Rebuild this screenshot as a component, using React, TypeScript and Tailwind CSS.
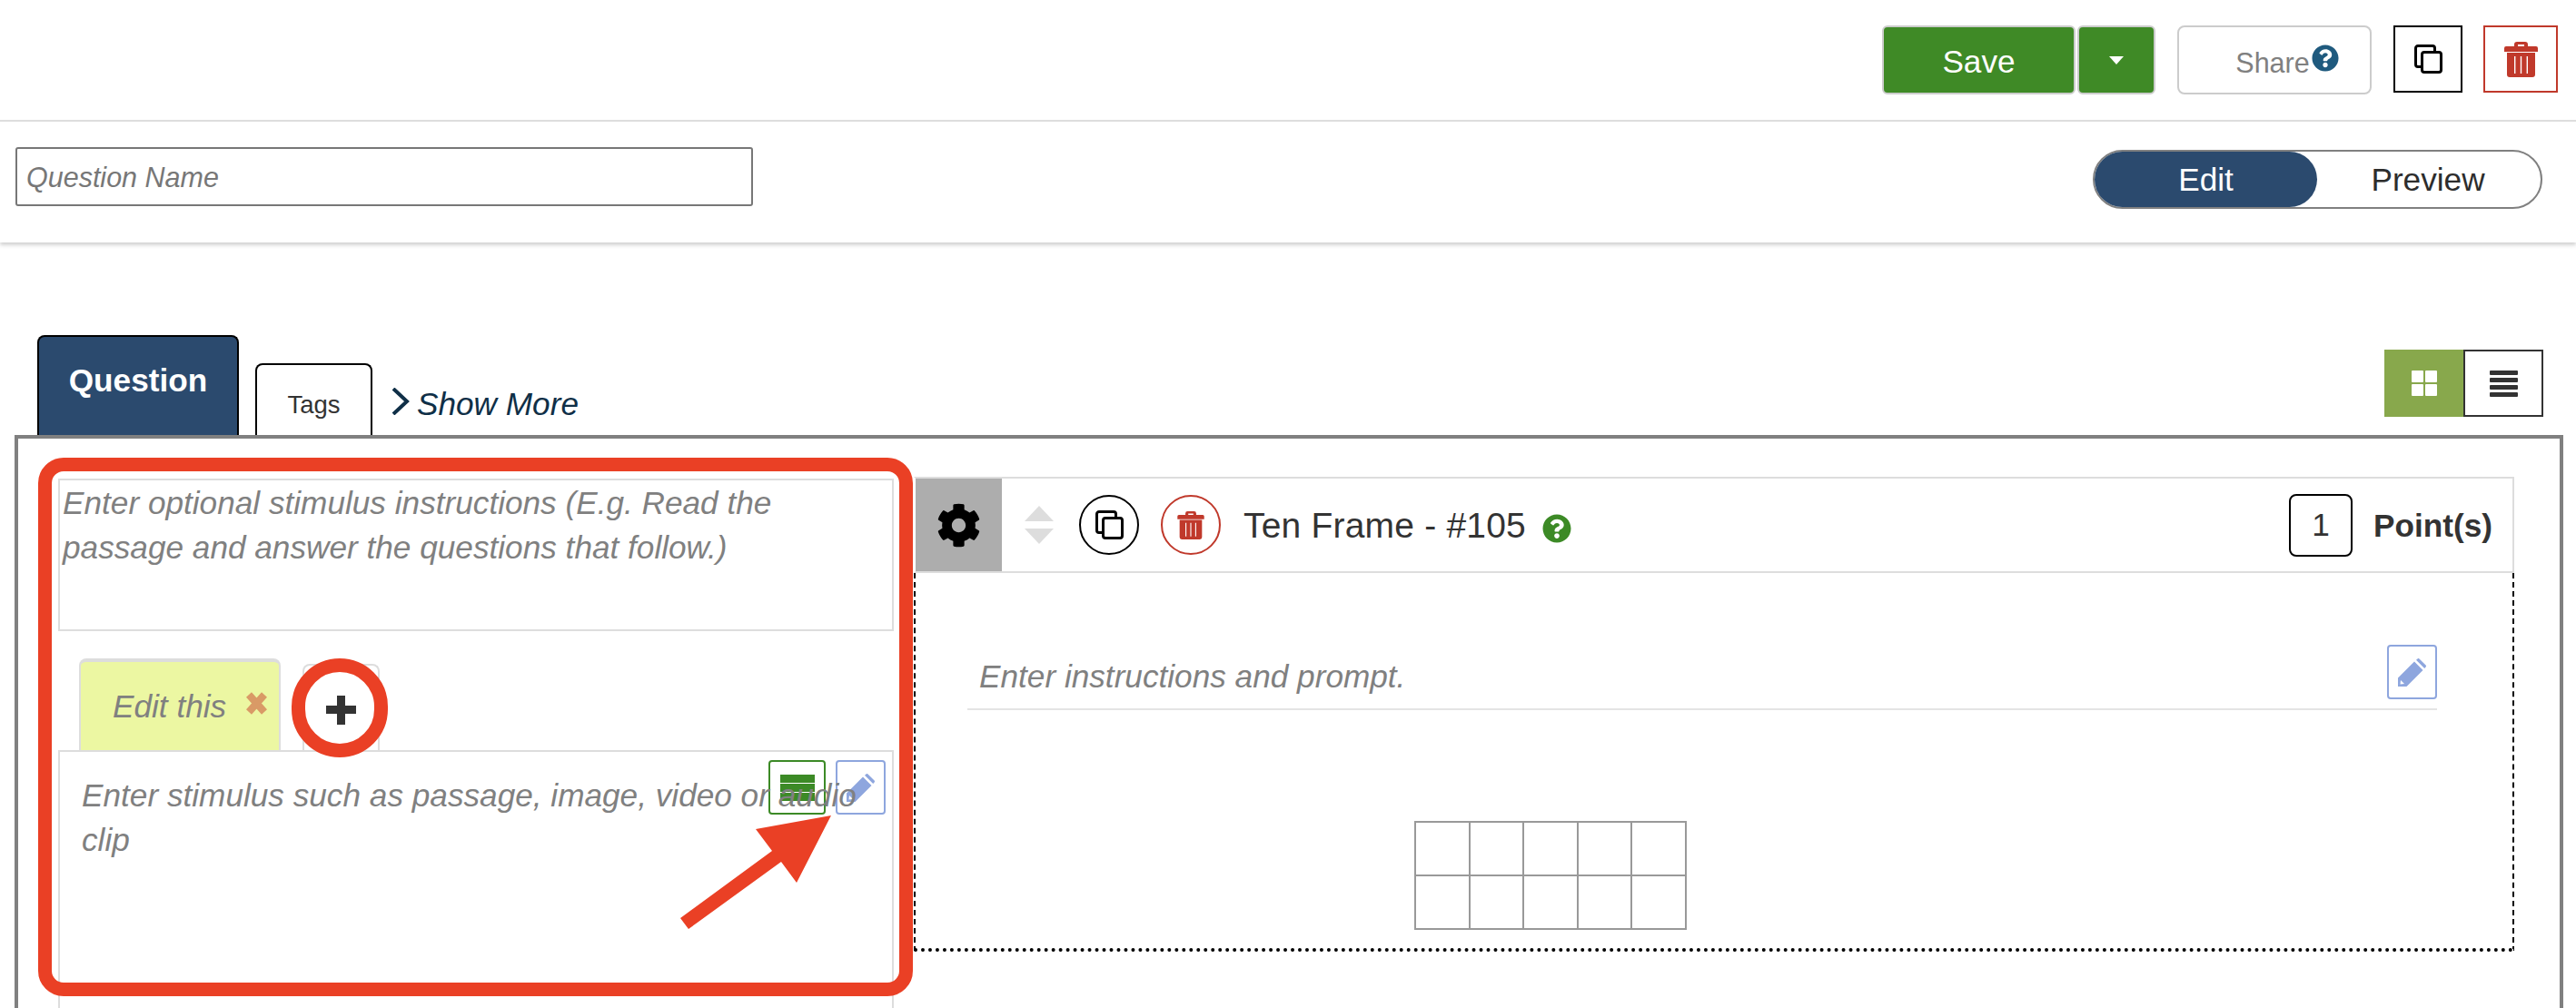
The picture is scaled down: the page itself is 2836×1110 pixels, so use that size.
import { FaCog, FaQuestionCircle } from "react-icons/fa";

function CopyIcon() {
  return (
    <svg viewBox="0 0 31 32" className="h-[32px] w-[31px]" fill="none" stroke="black" strokeWidth="3">
      <path d="M7 24.5 H4 a2.5 2.5 0 0 1 -2.5 -2.5 V4 a2.5 2.5 0 0 1 2.5 -2.5 H20 a2.5 2.5 0 0 1 2.5 2.5 V7" />
      <rect x="8.5" y="8.5" width="21" height="22" rx="2.5" />
    </svg>
  );
}

function TrashIcon({ className }: { className: string }) {
  return (
    <svg viewBox="0 0 37 39" className={className}>
      <path
        fill="#c0392b"
        fillRule="evenodd"
        d="M11 3 a3 3 0 0 1 3 -3 h9 a3 3 0 0 1 3 3 v2 h9 a2 2 0 0 1 2 2 v4 H0 V7 a2 2 0 0 1 2 -2 h9 z M15 3 v2 h7 v-2 z M3 12 H34 V36 a3 3 0 0 1 -3 3 H6 a3 3 0 0 1 -3 -3 z M11 16 v19 h1.4 v-19 z M17.8 16 v19 h1.4 v-19 z M24.6 16 v19 h1.4 v-19 z"
      />
    </svg>
  );
}

function PencilIcon() {
  return (
    <svg viewBox="0 0 31 31" className="h-[31px] w-[31px]">
      <path
        fill="#8ea6de"
        fillRule="evenodd"
        d="M0 31 V21.5 L18 3.5 L27.5 13 L9.5 31 z M3 24 L2.5 28.5 L7 28 z M20 1.8 L21.5 0.4 a1.5 1.5 0 0 1 2 0 L30.6 7.5 a1.5 1.5 0 0 1 0 2 L29.2 11 z"
      />
    </svg>
  );
}

function RowsIcon() {
  return (
    <div className="flex w-[38px] flex-col gap-[1px]">
      {[0, 1, 2].map((i) => (
        <div key={i} className="h-[9px] bg-[#3c8a26]" />
      ))}
    </div>
  );
}

function TenFrame() {
  return (
    <div className="grid h-[120px] w-[300px] grid-cols-5 grid-rows-2 border-t-2 border-b-2 border-l border-r border-[#999]">
      {Array.from({ length: 10 }).map((_, i) => (
        <div key={i} className={`border-x border-[#999] ${i < 5 ? "border-b" : "border-t"}`} />
      ))}
    </div>
  );
}

export default function App() {
  return (
    <div className="relative h-[1110px] w-[2836px] overflow-hidden bg-white font-['Liberation_Sans',Arial,sans-serif] text-[35.2px] text-[#333]">
      <header className="h-[267px] shadow-[0_3px_4px_rgba(0,0,0,0.18)]">
        <div className="flex h-[134px] items-start justify-end border-b-2 border-[#ddd] pt-[28px] pr-[20px]">
          <button className="h-[76px] w-[213px] rounded-[6px] border-2 border-[#ccc] bg-[#3f8a26] pt-[4px] text-white">Save</button>
          <button className="ml-[2px] flex h-[76px] w-[86px] items-center justify-center rounded-[6px] border-2 border-[#ccc] bg-[#3f8a26]">
            <span className="border-x-[8px] border-t-[9px] border-x-transparent border-t-white" />
          </button>
          <button className="relative ml-[24px] h-[76px] w-[214px] rounded-[8px] border-2 border-[#ccc] bg-white text-[30.5px] text-[#808080]">
            <span className="relative left-[-2px] top-[4px]">Share</span>
            <FaQuestionCircle className="absolute left-[146px] top-[19px] text-[30px] text-[#1f5a7e]" />
          </button>
          <button className="ml-[24px] flex h-[74px] w-[76px] items-center justify-center border-2 border-black">
            <CopyIcon />
          </button>
          <button className="ml-[23px] flex h-[74px] w-[82px] items-center justify-center border-2 border-[#c0392b]">
            <TrashIcon className="h-[39px] w-[37px]" />
          </button>
        </div>
        <div className="flex h-[131px] items-start justify-between pt-[28px] pr-[37px] pl-[17px]">
          <div className="flex h-[65px] w-[812px] items-center rounded-[3px] border-2 border-[#777] pt-[2px] pl-[10px] text-[30.5px] italic text-[#777]">
            Question Name
          </div>
          <div className="mt-[3px] flex h-[65px] w-[495px] rounded-full border-2 border-[#808080] text-[#2d2d2d]">
            <div className="flex w-[245px] items-center justify-center rounded-full bg-[#2b4a6e] pt-[2px] text-white">Edit</div>
            <div className="flex flex-1 items-center justify-center pt-[2px] pr-[2px]">Preview</div>
          </div>
        </div>
      </header>

      <div className="flex h-[212px] items-end pr-[36px] pl-[41px]">
        <div className="flex h-[110px] w-[222px] justify-center rounded-t-[8px] border-2 border-b-0 border-black bg-[#2b4a6e] pt-[22px] font-bold text-white">
          Question
        </div>
        <div className="ml-[18px] flex h-[79px] w-[129px] justify-center rounded-t-[8px] border-2 border-b-0 border-black pt-[23px] text-[27.5px]">
          Tags
        </div>
        <svg viewBox="0 0 20 30" className="mb-[22px] ml-[21px] h-[30px] w-[20px]" fill="none" stroke="#0f2f47" strokeWidth="4">
          <path d="M2 1 L17 15 L2 29" />
        </svg>
        <div className="mb-[7px] ml-[8px] italic text-[#0f2f47]">Show More</div>
        <div className="mb-[20px] ml-auto flex h-[74px]">
          <div className="flex w-[87px] items-center justify-center bg-[#88a84c]">
            <div className="grid grid-cols-2 gap-[2px]">
              {[0, 1, 2, 3].map((i) => (
                <div key={i} className="h-[13px] w-[13px] rounded-[1px] bg-white" />
              ))}
            </div>
          </div>
          <div className="flex w-[88px] flex-col items-center justify-center gap-[3px] border-2 border-[#333]">
            {[0, 1, 2, 3].map((i) => (
              <div key={i} className="h-[5px] w-[31px] rounded-[1px] bg-[#333]" />
            ))}
          </div>
        </div>
      </div>

      <main className="ml-[16px] flex h-[700px] w-[2806px] border-4 border-[#808080] pt-[42px] pl-[44px]">
        <div className="w-[920px]">
          <div className="mt-[2px] h-[168px] border-2 border-[#ddd] px-[3px] italic leading-[49px] text-[#808080]">
            Enter optional stimulus instructions (E.g. Read the
            <br />
            passage and answer the questions that follow.)
          </div>
          <div className="flex h-[131px] items-end pl-[23px]">
            <div className="flex h-[101px] w-[222px] items-start rounded-t-[8px] border-x-2 border-t-[4px] border-[#ddd] bg-[#ecf7a2] pt-[23px] pl-[35px] italic text-[#808080]">
              Edit this
              <svg viewBox="0 0 25 25" className="mt-[10px] ml-[21px] h-[25px] w-[25px]" stroke="#d99a66" strokeWidth="8">
                <path d="M4 3 L21 22 M21 3 L4 22" />
              </svg>
            </div>
            <div className="ml-[24px] flex h-[95px] w-[85px] items-center justify-center rounded-t-[8px] border-x-2 border-t-2 border-[#ddd]">
              <svg viewBox="0 0 33 32" className="mt-[4px] h-[32px] w-[33px]">
                <path fill="#333" d="M12 0 h9 v11 h12 v9 h-12 v12 h-9 v-12 h-12 v-9 h12 z" />
              </svg>
            </div>
          </div>
          <div className="relative h-[300px] border-2 border-[#ddd] pt-[23px] pl-[24px] italic leading-[49px] text-[#808080]">
            <div className="relative z-10">
              Enter stimulus such as passage, image, video or audio
              <br />
              clip
            </div>
            <div className="absolute top-[9px] left-[780px] flex h-[60px] w-[63px] items-center justify-center rounded-[4px] border-2 border-[#3c8a26]">
              <RowsIcon />
            </div>
            <div className="absolute top-[9px] left-[854px] flex h-[60px] w-[55px] items-center justify-center rounded-[4px] border-2 border-[#8ea6de]">
              <PencilIcon />
            </div>
          </div>
        </div>

        <div className="ml-[22px] w-[1762px]">
          <div className="flex h-[106px] items-center border-y-2 border-r-2 border-l-2 border-[#ddd] border-l-white">
            <div className="flex h-full w-[95px] items-center justify-center bg-[#adadad]">
              <FaCog className="text-[49px] text-black" />
            </div>
            <div className="ml-[25px] flex flex-col gap-[8px]">
              <span className="border-x-[16px] border-b-[17px] border-x-transparent border-b-[#ddd]" />
              <span className="border-x-[16px] border-t-[17px] border-x-transparent border-t-[#ddd]" />
            </div>
            <div className="ml-[28px] flex h-[66px] w-[66px] items-center justify-center rounded-full border-2 border-black">
              <CopyIcon />
            </div>
            <div className="ml-[24px] flex h-[66px] w-[66px] items-center justify-center rounded-full border-2 border-[#c0392b]">
              <TrashIcon className="h-[31px] w-[30px]" />
            </div>
            <div className="ml-[25px] pt-[2px] text-[39px] tracking-[0.2px]">Ten Frame - #105</div>
            <FaQuestionCircle className="mt-[8px] ml-[18px] text-[32px] text-[#3c8a26]" />
            <div className="ml-auto flex h-[69px] w-[70px] items-center justify-center rounded-[8px] border-2 border-black">1</div>
            <div className="mr-[22px] ml-[23px] pt-[2px] font-bold">Point(s)</div>
          </div>
          <div className="h-[417px] border-x-2 border-dashed border-black [border-bottom:4px_dotted_black]">
            <div className="ml-[57px] flex h-[151px] w-[1618px] items-end justify-between border-b-2 border-[#e4e4e4] pb-[10px] italic text-[#808080]">
              <span className="-mb-[2px] pl-[13px]">Enter instructions and prompt.</span>
              <div className="flex h-[60px] w-[55px] items-center justify-center rounded-[4px] border-2 border-[#8ea6de]">
                <PencilIcon />
              </div>
            </div>
            <div className="mt-[122px] ml-[549px]">
              <TenFrame />
            </div>
          </div>
        </div>
      </main>

      {/* red callouts drawn over the page */}
      <div className="absolute top-[504px] left-[42px] h-[593px] w-[963px] rounded-[28px] border-[15px] border-[#ea4025]" />
      <div className="absolute top-[725px] left-[321px] h-[109px] w-[106px] rounded-full border-[15px] border-[#ea4025]" />
      <svg className="absolute top-[890px] left-[740px] z-20 h-[140px] w-[185px]" viewBox="740 890 185 140">
        <polygon fill="#ea4025" points="915,898 832,913 850,937 749,1011 758,1023 860,949 877,972" />
      </svg>
    </div>
  );
}
